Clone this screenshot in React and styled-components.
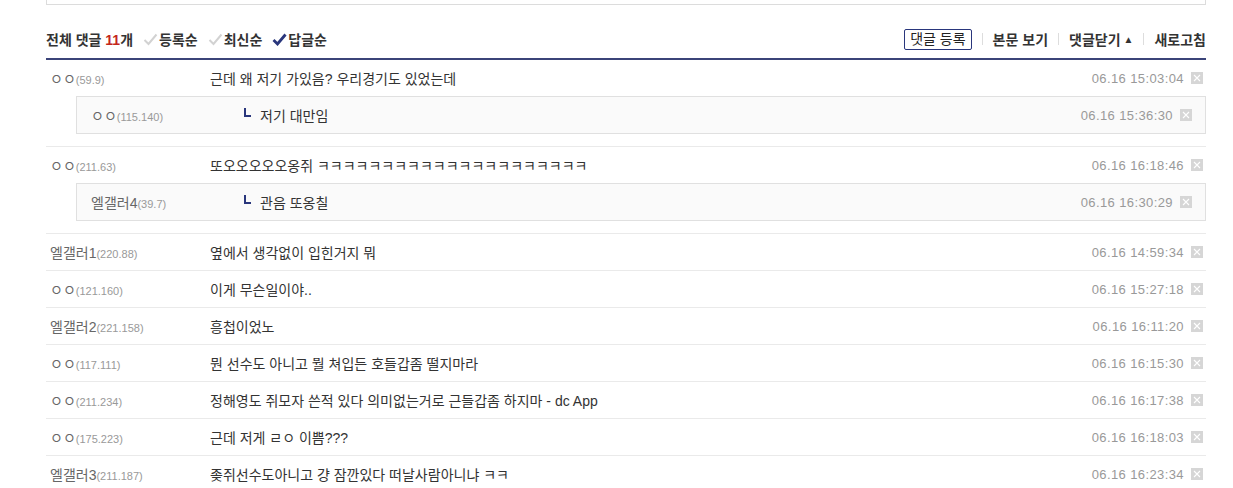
import styled, { createGlobalStyle } from 'styled-components';

const GlobalStyle = createGlobalStyle`
  body {
    margin: 0;
    background: #fff;
    font-family: 'Liberation Sans', 'Noto Sans CJK KR', sans-serif;
    color: #333;
  }
`;

const comments = [
  {
    id: 1,
    nick: 'ㅇㅇ',
    ip: '59.9',
    text: '근데 왜 저기 가있음? 우리경기도 있었는데',
    date: '06.16 15:03:04',
    reply: { nick: 'ㅇㅇ', ip: '115.140', text: '저기 대만임', date: '06.16 15:36:30' },
  },
  {
    id: 2,
    nick: 'ㅇㅇ',
    ip: '211.63',
    text: '또오오오오오옹쥐 ㅋㅋㅋㅋㅋㅋㅋㅋㅋㅋㅋㅋㅋㅋㅋㅋㅋㅋㅋㅋㅋ',
    date: '06.16 16:18:46',
    reply: { nick: '엘갤러4', ip: '39.7', text: '관음 또옹칠', date: '06.16 16:30:29' },
  },
  { id: 3, nick: '엘갤러1', ip: '220.88', text: '옆에서 생각없이 입힌거지 뭐', date: '06.16 14:59:34' },
  { id: 4, nick: 'ㅇㅇ', ip: '121.160', text: '이게 무슨일이야..', date: '06.16 15:27:18' },
  { id: 5, nick: '엘갤러2', ip: '221.158', text: '흥첩이었노', date: '06.16 16:11:20' },
  { id: 6, nick: 'ㅇㅇ', ip: '117.111', text: '뭔 선수도 아니고 뭘 쳐입든 호들갑좀 떨지마라', date: '06.16 16:15:30' },
  { id: 7, nick: 'ㅇㅇ', ip: '211.234', text: '정해영도 쥐모자 쓴적 있다 의미없는거로 근들갑좀 하지마 - dc App', date: '06.16 16:17:38' },
  { id: 8, nick: 'ㅇㅇ', ip: '175.223', text: '근데 저게 ㄹㅇ 이쁨???', date: '06.16 16:18:03' },
  { id: 9, nick: '엘갤러3', ip: '211.187', text: '좆쥐선수도아니고 걍 잠깐있다 떠날사람아니냐 ㅋㅋ', date: '06.16 16:23:34' },
];

const Check = ({ active }) => (
  <svg width="15" height="13" viewBox="0 0 15 13">
    <path
      d="M1.5 7 L5.5 11 L13.5 1.5"
      fill="none"
      stroke={active ? '#29367c' : '#d2d2d2'}
      strokeWidth={active ? 2.8 : 2}
    />
  </svg>
);

const DeleteIcon = () => (
  <DelBox>
    <svg width="12" height="12" viewBox="0 0 12 12">
      <rect width="12" height="12" fill="#d6d6d6" />
      <path d="M3 3 L9 9 M9 3 L3 9" stroke="#fff" strokeWidth="1.1" />
    </svg>
  </DelBox>
);

const App = () => {
  return (
    <Page>
      <GlobalStyle />
      <TopBox />
      <Header>
        <HeaderLeft>
          <Total>
            전체 댓글 <Count>11</Count>개
          </Total>
          <Sort>
            <Check /> 등록순
          </Sort>
          <Sort>
            <Check /> 최신순
          </Sort>
          <Sort>
            <Check active /> 답글순
          </Sort>
        </HeaderLeft>
        <HeaderRight>
          <WriteBtn>댓글 등록</WriteBtn>
          <Bar />
          <Action>본문 보기</Action>
          <Bar />
          <Action>
            댓글닫기 <Arrow>▲</Arrow>
          </Action>
          <Bar />
          <Action>새로고침</Action>
        </HeaderRight>
      </Header>
      <List>
        {comments.map((c) => (
          <Item key={c.id} hasReply={!!c.reply}>
            <Row>
              <Nick>
                {c.nick}
                <Ip>({c.ip})</Ip>
              </Nick>
              <Text>{c.text}</Text>
              <Date>{c.date}</Date>
              <DeleteIcon />
            </Row>
            {c.reply && (
              <ReplyBox>
                <Row>
                  <Nick reply>
                    {c.reply.nick}
                    <Ip>({c.reply.ip})</Ip>
                  </Nick>
                  <ReplyMark />
                  <Text>{c.reply.text}</Text>
                  <Date>{c.reply.date}</Date>
                  <DeleteIcon />
                </Row>
              </ReplyBox>
            )}
          </Item>
        ))}
      </List>
    </Page>
  );
};

export default App;

const Page = styled.div`
  padding-left: 46px;
  width: 1160px;
`;

const TopBox = styled.div`
  height: 4px;
  border: 1px solid #dcdcdc;
  border-top: none;
`;

const Header = styled.div`
  margin-top: 22px;
  height: 24px;
  padding-bottom: 7px;
  border-bottom: 2px solid #3b4479;
  display: flex;
  align-items: center;
  justify-content: space-between;
`;

const HeaderLeft = styled.div`
  display: flex;
  align-items: center;
  gap: 10px;
`;

const Total = styled.span`
  font-size: 14px;
  font-weight: bold;
  color: #333;
`;

const Count = styled.em`
  font-style: normal;
  color: #c4261b;
`;

const Sort = styled.span`
  display: flex;
  align-items: center;
  gap: 1px;
  font-size: 14px;
  font-weight: bold;
  color: #333;
`;

const HeaderRight = styled.div`
  display: flex;
  align-items: center;
  gap: 10px;
`;

const WriteBtn = styled.span`
  border: 1px solid #29367c;
  border-radius: 2px;
  padding: 1px 5px;
  font-size: 14px;
  color: #222;
  line-height: 17px;
`;

const Bar = styled.span`
  width: 1px;
  height: 12px;
  background: #ddd;
`;

const Action = styled.span`
  font-size: 14px;
  font-weight: bold;
  color: #333;
  display: flex;
  align-items: center;
  gap: 3px;
`;

const Arrow = styled.span`
  font-size: 10px;
`;

const List = styled.ul`
  list-style: none;
  margin: 0;
  padding: 0;
`;

const Item = styled.li`
  border-bottom: 1px solid #eaeaea;
  padding-bottom: ${(p) => (p.hasReply ? '12px' : '0')};
`;

const Row = styled.div`
  display: flex;
  align-items: center;
  height: 36px;
`;

const Nick = styled.span`
  width: ${(p) => (p.reply ? '157px' : '164px')};
  padding-left: 4px;
  box-sizing: border-box;
  font-size: 14px;
  color: #666;
  white-space: nowrap;
`;

const Ip = styled.span`
  font-size: 11px;
  color: #999;
`;

const Text = styled.span`
  flex: 1;
  font-size: 14px;
  color: #333;
  white-space: nowrap;
`;

const Date = styled.span`
  font-size: 13px;
  letter-spacing: 0.4px;
  color: #999;
  margin-right: 7px;
`;

const DelBox = styled.span`
  display: flex;
  margin-right: 3px;
`;

const ReplyBox = styled.div`
  margin-left: 30px;
  border: 1px solid #e0e0e0;
  background: #fafafa;
  padding: 0 10px 0 10px;
`;

const ReplyMark = styled.span`
  width: 5px;
  height: 7px;
  border-left: 2px solid #29367c;
  border-bottom: 2px solid #29367c;
  margin: 0 9px 5px 0;
`;
